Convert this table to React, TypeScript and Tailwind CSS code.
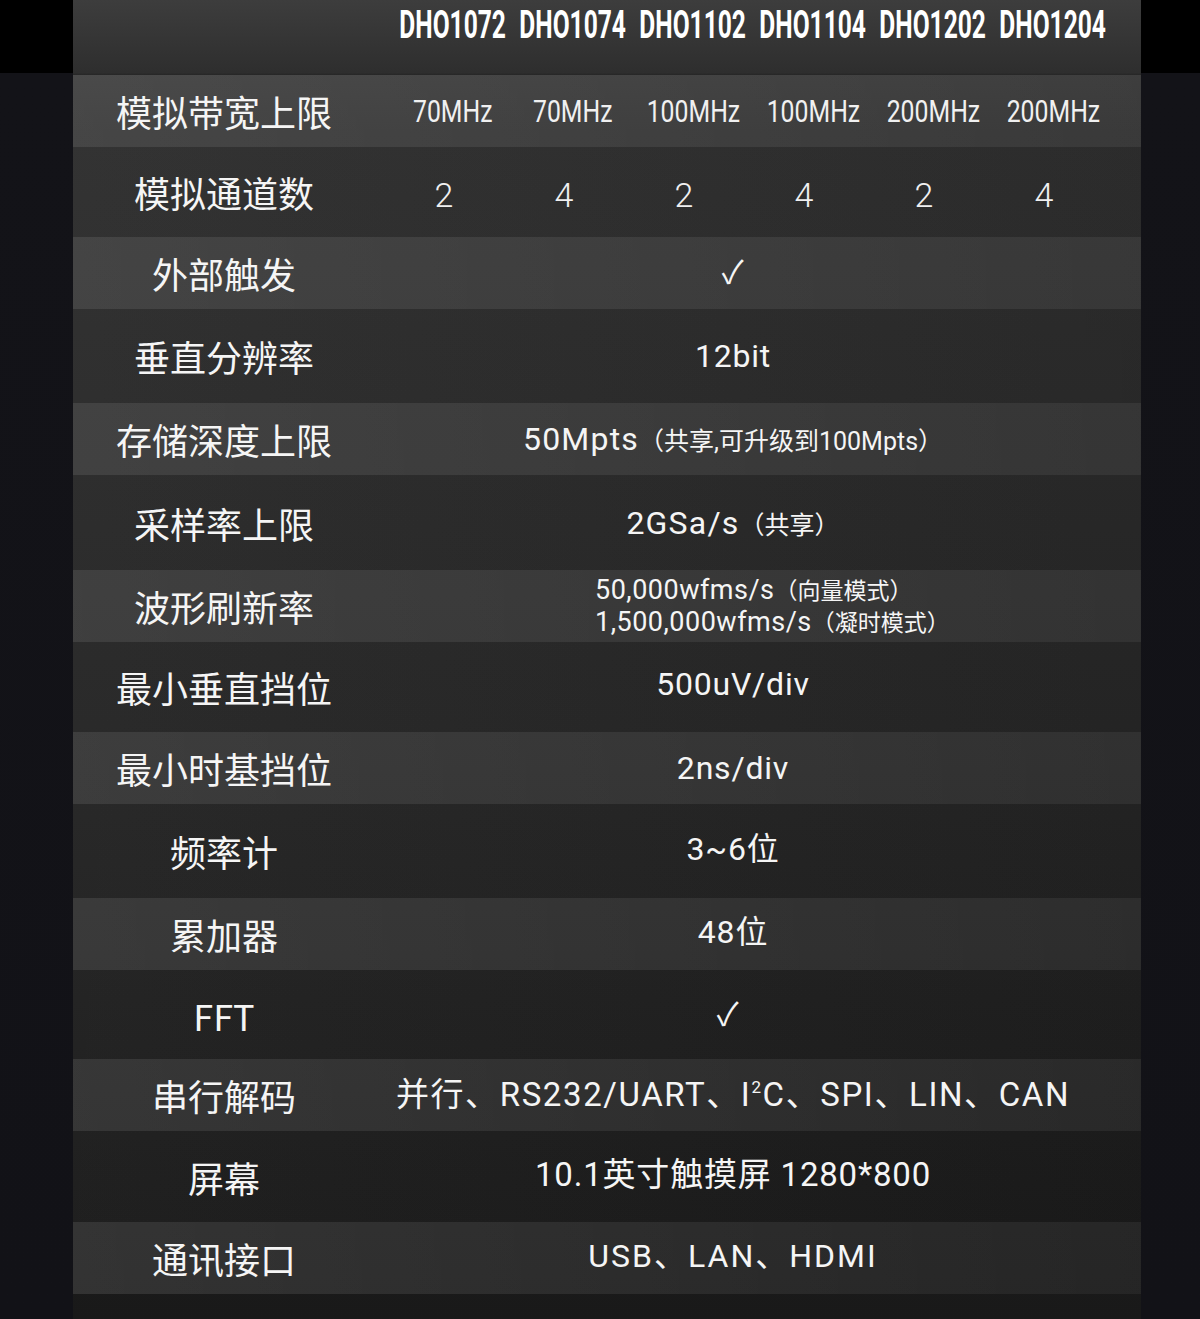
import React from 'react';

const models = ['DHO1072', 'DHO1074', 'DHO1102', 'DHO1104', 'DHO1202', 'DHO1204'];
const bandwidth = ['70MHz', '70MHz', '100MHz', '100MHz', '200MHz', '200MHz'];
const channels = ['2', '4', '2', '4', '2', '4'];

const latin = "font-['Roboto','Noto_Sans_CJK_SC',sans-serif]";
const cjk = "font-['Noto_Sans_CJK_SC','Noto_Sans',sans-serif]";

function Small({ children, size = 'text-[24px]' }: { children: React.ReactNode; size?: string }) {
  return <span className={`${size} tracking-normal`}>{children}</span>;
}

function Row({
  label,
  light,
  height,
  children,
}: {
  label: string;
  light: boolean;
  height: string;
  children: React.ReactNode;
}) {
  return (
    <div
      className={`flex items-center ${height} ${
        light
          ? 'bg-[linear-gradient(to_right,rgba(255,255,255,0.11),rgba(255,255,255,0.05))]'
          : 'bg-[linear-gradient(to_right,rgba(255,255,255,0.02),rgba(0,0,0,0.06))]'
      }`}
    >
      <div className={`w-[302px] shrink-0 text-center text-[36px] leading-none text-[#f5f5f5] ${cjk}`}>
        {label}
      </div>
      {children}
    </div>
  );
}

function Span({ children, className = '' }: { children: React.ReactNode; className?: string }) {
  return (
    <div className={`w-[716px] text-center text-[32px] leading-none text-[#f5f5f5] tracking-[0.8px] ${latin} ${className}`}>
      {children}
    </div>
  );
}

export default function App() {
  return (
    <div className="w-[1200px] h-[1319px] overflow-hidden flex bg-[linear-gradient(to_bottom,#000_0,#000_73px,#131318_73px,#121217_100%)]">
      <div className="w-[1068px] ml-[73px] flex flex-col bg-[linear-gradient(to_bottom,#3a3a3a,#2f2f2f_10%,#262626_55%,#191919)]">
        {/* header */}
        <div className="h-[75px] flex bg-[linear-gradient(to_bottom,#3d3d3d,#2e2e2e_97%,#262626)]">
          <div className="w-[302px] shrink-0" />
          <div className="ml-[18px] grid grid-cols-6 w-[720px] pt-[3px]">
            {models.map((m) => (
              <div key={m} className="flex justify-center">
                <span className="inline-block scale-x-[0.63] text-[39px] font-bold leading-[44px] text-white font-['Roboto',sans-serif]">
                  {m}
                </span>
              </div>
            ))}
          </div>
        </div>

        <Row label="模拟带宽上限" light height="h-[72px]">
          <div className="ml-[18px] grid grid-cols-6 w-[720px]">
            {bandwidth.map((b, i) => (
              <div key={i} className="flex justify-center">
                <span className={`inline-block scale-x-[0.8] text-[31px] leading-none text-[#f0f0f0] ${latin}`}>{b}</span>
              </div>
            ))}
          </div>
        </Row>

        <Row label="模拟通道数" light={false} height="h-[90px]">
          <div className="ml-[18px] grid grid-cols-6 w-[720px] pt-[6px]">
            {channels.map((c, i) => (
              <div key={i} className={`text-center pr-[18px] text-[34px] font-light leading-none text-[#f0f0f0] ${latin}`}>
                {c}
              </div>
            ))}
          </div>
        </Row>

        <Row label="外部触发" light height="h-[72px]">
          <Span className="font-['DejaVu_Sans',sans-serif] text-[28px]">✓</Span>
        </Row>

        <Row label="垂直分辨率" light={false} height="h-[94px]">
          <Span>12bit</Span>
        </Row>

        <Row label="存储深度上限" light height="h-[72px]">
          <Span className="tracking-[1.2px]">
            50Mpts<Small size="text-[25px]">（共享,可升级到100Mpts）</Small>
          </Span>
        </Row>

        <Row label="采样率上限" light={false} height="h-[95px]">
          <Span className="tracking-[1.2px]">
            2GSa/s<Small size="text-[25px]">（共享）</Small>
          </Span>
        </Row>

        <Row label="波形刷新率" light height="h-[72px]">
          <div className={`w-[716px] pl-[220px] pt-[2px] text-left text-[27px] leading-[31px] tracking-[0.5px] text-[#f5f5f5] ${latin}`}>
            <div>
              50,000wfms/s<Small size="text-[23px]">（向量模式）</Small>
            </div>
            <div>
              1,500,000wfms/s<Small size="text-[23px]">（凝时模式）</Small>
            </div>
          </div>
        </Row>

        <Row label="最小垂直挡位" light={false} height="h-[90px]">
          <Span className="pb-[6px]">500uV/div</Span>
        </Row>

        <Row label="最小时基挡位" light height="h-[72px]">
          <Span>2ns/div</Span>
        </Row>

        <Row label="频率计" light={false} height="h-[94px]">
          <Span className="pb-[4px]">3~6位</Span>
        </Row>

        <Row label="累加器" light height="h-[72px]">
          <Span className="pb-[4px]">48位</Span>
        </Row>

        <Row label="FFT" light={false} height="h-[89px]">
          <Span className="font-['DejaVu_Sans',sans-serif] text-[28px] pr-[10px]">✓</Span>
        </Row>

        <Row label="串行解码" light height="h-[72px]">
          <Span className="text-[33px] tracking-[1.6px] pb-[2px]">
            并行、RS232/UART、I<sup className="text-[17px] relative top-[-13px]">2</sup>C、SPI、LIN、CAN
          </Span>
        </Row>

        <Row label="屏幕" light={false} height="h-[91px]">
          <Span className="text-[33px] tracking-[0.4px] pb-[4px]">10.1英寸触摸屏 1280*800</Span>
        </Row>

        <Row label="通讯接口" light height="h-[72px]">
          <Span className="pb-[4px] tracking-[2px]">USB、LAN、HDMI</Span>
        </Row>

        <div className="h-[25px] shrink-0" />
      </div>
    </div>
  );
}
